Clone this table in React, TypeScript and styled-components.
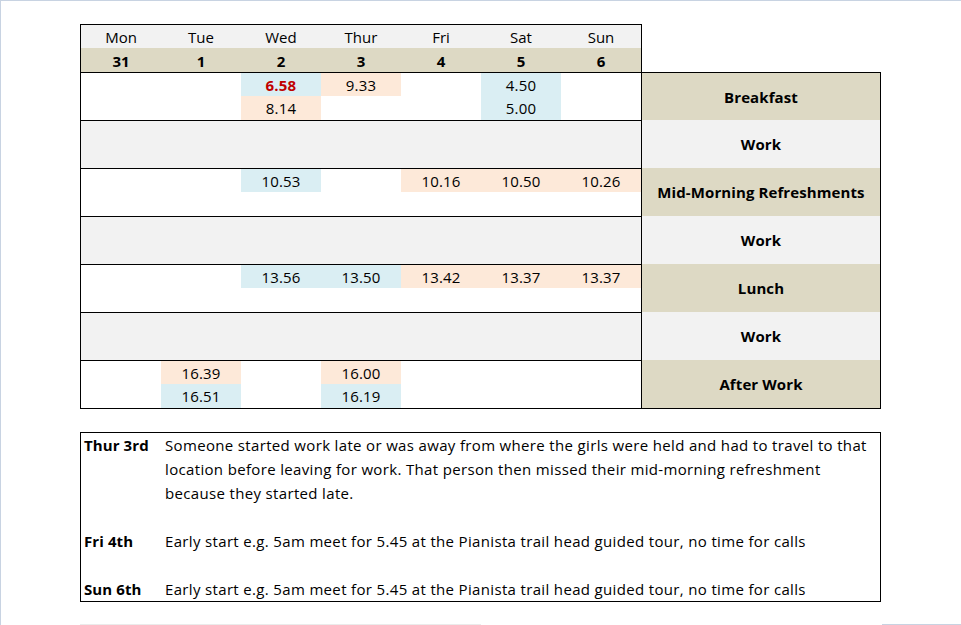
import React from "react";
import styled, { createGlobalStyle } from "styled-components";

const GlobalStyle = createGlobalStyle`
  html, body {
    margin: 0;
    padding: 0;
    background: #fff;
  }
  body {
    font-family: "Open Sans", Lato, sans-serif;
    color: #000;
  }
`;

const colors = {
  tan: "#ddd9c4",
  grey: "#f2f2f2",
  blue: "#daeef3",
  peach: "#fde9d9",
  red: "#c00000",
  frame: "#c8d3e2",
};

type Tint = "blue" | "peach";
type Cell = { v: string; tint: Tint; red?: boolean } | null;
type Section = {
  label: string;
  kind: "meal" | "work";
  top: Cell[];
  bottom: Cell[];
};

const none: Cell[] = [null, null, null, null, null, null, null];
const b = (v: string, red?: boolean): Cell => ({ v, tint: "blue", red });
const p = (v: string): Cell => ({ v, tint: "peach" });

const days = [
  ["Mon", "31"],
  ["Tue", "1"],
  ["Wed", "2"],
  ["Thur", "3"],
  ["Fri", "4"],
  ["Sat", "5"],
  ["Sun", "6"],
];

const work: Section = { label: "Work", kind: "work", top: none, bottom: none };

const sections: Section[] = [
  {
    label: "Breakfast",
    kind: "meal",
    top: [null, null, b("6.58", true), p("9.33"), null, b("4.50"), null],
    bottom: [null, null, p("8.14"), null, null, b("5.00"), null],
  },
  work,
  {
    label: "Mid-Morning Refreshments",
    kind: "meal",
    top: [null, null, b("10.53"), null, p("10.16"), p("10.50"), p("10.26")],
    bottom: none,
  },
  work,
  {
    label: "Lunch",
    kind: "meal",
    top: [null, null, b("13.56"), b("13.50"), p("13.42"), p("13.37"), p("13.37")],
    bottom: none,
  },
  work,
  {
    label: "After Work",
    kind: "meal",
    top: [null, p("16.39"), null, p("16.00"), null, null, null],
    bottom: [null, b("16.51"), null, b("16.19"), null, null, null],
  },
];

const notes = [
  {
    day: "Thur 3rd",
    lines: [
      "Someone started work late or was away from where the girls were held and had to travel to that",
      "location before leaving for work. That person then missed their mid-morning refreshment",
      "because they started late.",
    ],
  },
  {
    day: "Fri 4th",
    lines: ["Early start e.g. 5am meet for 5.45 at the Pianista trail head guided tour, no time for calls"],
  },
  {
    day: "Sun 6th",
    lines: ["Early start e.g. 5am meet for 5.45 at the Pianista trail head guided tour, no time for calls"],
  },
];

const Page = styled.div`
  box-sizing: border-box;
  width: 961px;
  height: 625px;
  border-top: 1px solid ${colors.frame};
  border-left: 1px solid ${colors.frame};
  display: flex;
  flex-direction: column;
  overflow: hidden;
`;

const Sheet = styled.div`
  display: grid;
  grid-template-columns: 561px 240px;
  margin: 23px 0 0 79px;
  font-size: 15px;
`;

const HeaderBlock = styled.div`
  box-sizing: border-box;
  grid-column: 1;
  width: 562px;
  border: 1px solid #000;
  border-bottom: 0;
`;

const DayRow = styled.div<{ $bold?: boolean }>`
  display: grid;
  grid-template-columns: repeat(7, 80px);
  height: ${(p) => (p.$bold ? 24 : 23)}px;
  background: ${(p) => (p.$bold ? colors.tan : colors.grey)};
  font-weight: ${(p) => (p.$bold ? 700 : 400)};
`;

const HeadCell = styled.div`
  display: flex;
  align-items: center;
  justify-content: center;
  padding-top: 1px;
`;

const Days = styled.div<{ $work: boolean; $last: boolean }>`
  box-sizing: border-box;
  grid-column: 1;
  display: grid;
  grid-template-columns: repeat(7, 80px);
  grid-template-rows: 23px 24px;
  height: ${(p) => (p.$last ? 49 : 48)}px;
  border-left: 1px solid #000;
  border-top: 1px solid #000;
  border-bottom: ${(p) => (p.$last ? "1px solid #000" : "0")};
  background: ${(p) => (p.$work ? colors.grey : "#fff")};
`;

const Value = styled.div<{ $tint?: Tint; $red?: boolean }>`
  display: flex;
  align-items: center;
  justify-content: center;
  letter-spacing: 0.2px;
  background: ${(p) => (p.$tint ? colors[p.$tint] : "transparent")};
  color: ${(p) => (p.$red ? colors.red : "#000")};
  font-weight: ${(p) => (p.$red ? 700 : 400)};
`;

const Label = styled.div<{ $work: boolean; $first: boolean; $last: boolean }>`
  box-sizing: border-box;
  grid-column: 2;
  height: ${(p) => (p.$last ? 49 : 48)}px;
  display: flex;
  align-items: center;
  justify-content: center;
  letter-spacing: 0.1px;
  border-left: 1px solid #000;
  border-right: 1px solid #000;
  border-top: ${(p) => (p.$first ? "1px solid #000" : "0")};
  border-bottom: ${(p) => (p.$last ? "1px solid #000" : "0")};
  background: ${(p) => (p.$work ? colors.grey : colors.tan)};
  font-weight: 700;
`;

const NoteBox = styled.div`
  box-sizing: border-box;
  width: 801px;
  margin: 23px 0 0 79px;
  border: 1px solid #000;
  padding: 0 0 0 3px;
  font-size: 15px;
  line-height: 24px;
  display: flex;
  flex-direction: column;
  gap: 24px;
`;

const Note = styled.div`
  display: grid;
  grid-template-columns: 81px 1fr;
`;

const NoteDay = styled.div`
  font-weight: 700;
  letter-spacing: 0.1px;
`;

const NoteText = styled.div`
  white-space: nowrap;
  letter-spacing: 0.34px;
`;

const Footer = styled.div`
  margin-top: auto;
  display: flex;
  height: 1px;
`;

const FooterRule = styled.div<{ $from: number; $to: number; $color: string }>`
  margin-left: ${(p) => p.$from}px;
  width: ${(p) => p.$to}px;
  background: ${(p) => p.$color};
`;

export default function App() {
  return (
    <Page>
      <GlobalStyle />
      <Sheet>
        <HeaderBlock>
          <DayRow>
            {days.map(([d]) => (
              <HeadCell key={d}>{d}</HeadCell>
            ))}
          </DayRow>
          <DayRow $bold>
            {days.map(([d, n]) => (
              <HeadCell key={d}>{n}</HeadCell>
            ))}
          </DayRow>
        </HeaderBlock>
        {sections.map((s, i) => {
          const last = i === sections.length - 1;
          const isWork = s.kind === "work";
          return (
            <React.Fragment key={i}>
              <Days $work={isWork} $last={last}>
                {[...s.top, ...s.bottom].map((c, j) => (
                  <Value key={j} $tint={c?.tint} $red={c?.red}>
                    {c?.v}
                  </Value>
                ))}
              </Days>
              <Label $work={isWork} $first={i === 0} $last={last}>
                {s.label}
              </Label>
            </React.Fragment>
          );
        })}
      </Sheet>
      <NoteBox>
        {notes.map((n) => (
          <Note key={n.day}>
            <NoteDay>{n.day}</NoteDay>
            <NoteText>
              {n.lines.map((l, k) => (
                <div key={k}>{l}</div>
              ))}
            </NoteText>
          </Note>
        ))}
      </NoteBox>
      <Footer>
        <FooterRule $from={79} $to={401} $color="#ebebeb" />
        <FooterRule $from={401} $to={79} $color={colors.frame} />
      </Footer>
    </Page>
  );
}
